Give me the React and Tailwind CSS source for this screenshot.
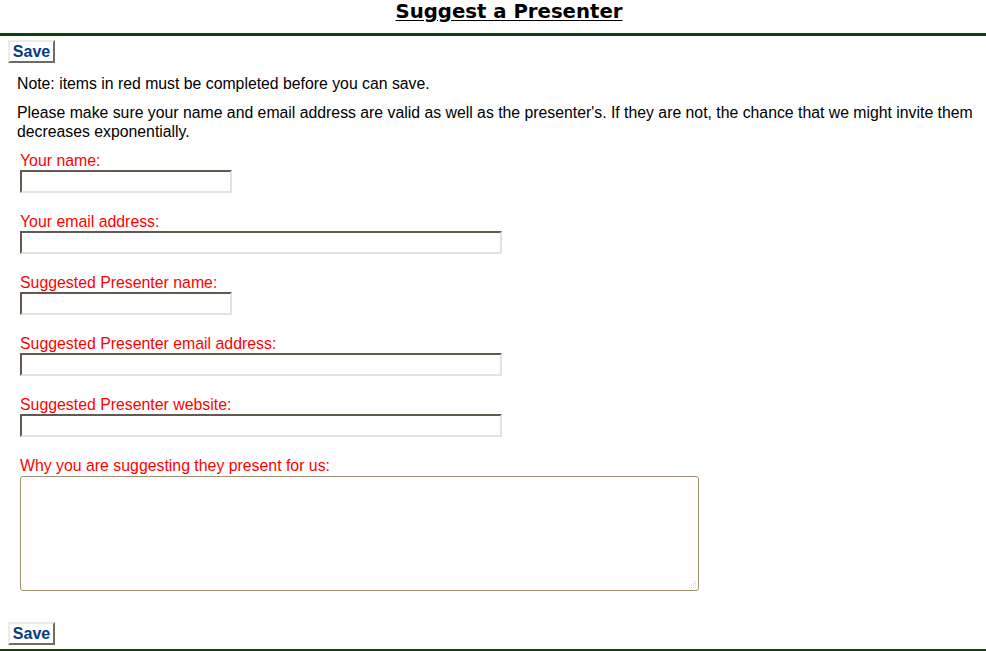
import { useState } from 'react';

const fields = [
  { key: 'name', label: 'Your name:', width: 'w-[212px]' },
  { key: 'email', label: 'Your email address:', width: 'w-[482px]' },
  { key: 'presenterName', label: 'Suggested Presenter name:', width: 'w-[212px]' },
  { key: 'presenterEmail', label: 'Suggested Presenter email address:', width: 'w-[482px]' },
  { key: 'presenterSite', label: 'Suggested Presenter website:', width: 'w-[482px]' },
];

const SaveButton = () => (
  <button
    type="button"
    className="h-[23px] w-[47px] border-2 border-t-[#ecebe6] border-l-[#ecebe6] border-b-[#6e6c68] border-r-[#6e6c68] bg-white text-[16px] leading-[19px] font-bold text-[#073b7c]"
  >
    Save
  </button>
);

const App = () => {
  const [values, setValues] = useState({});

  const update = (key) => (e) => setValues(prev => ({ ...prev, [key]: e.target.value }));

  return (
    <div className="w-[986px] min-h-[651px] bg-white text-black font-['Liberation_Sans',Arial,sans-serif]">
      {/* Title */}
      <div className="h-[33px] pl-[32px] text-center">
        <h1 className="inline-block font-['DejaVu_Sans',Verdana,sans-serif] text-[19.7px] leading-[24px] font-bold underline underline-offset-[2px]">
          Suggest a Presenter
        </h1>
      </div>
      <div className="h-[3px] bg-[#0b440b]" />

      <div className="pl-[8px] pt-[4px]">
        <SaveButton />
      </div>

      <div className="pl-[17px] pr-[6px] text-[15.8px] leading-[19px]">
        <p className="mt-[10px]">Note: items in red must be completed before you can save.</p>
        <p className="mt-[10px]">
          Please make sure your name and email address are valid as well as the presenter's. If they are not, the chance that we might invite them decreases exponentially.
        </p>
      </div>

      {/* Form fields */}
      <div className="pl-[20px] pt-[10px] text-[15.85px] leading-[19px] text-[#ff0000]">
        {fields.map(field => (
          <div key={field.key} className="mb-[19px]">
            <label className="block h-[19px]">{field.label}</label>
            <input
              type="text"
              value={values[field.key] || ''}
              onChange={update(field.key)}
              className={`block h-[23px] ${field.width} border-2 border-t-[#625a4f] border-l-[#625a4f] border-b-[#e6e2db] border-r-[#e6e2db] bg-white outline-none text-black`}
            />
          </div>
        ))}
        <label className="block h-[20px]">Why you are suggesting they present for us:</label>
        <div className="relative w-[679px]">
          <textarea
            value={values.reason || ''}
            onChange={update('reason')}
            className="block h-[115px] w-[679px] resize-none rounded-[3px] border border-[#9d9374] bg-white outline-none text-black"
          />
          {/* dotted resize grip */}
          <svg className="absolute right-[2px] bottom-[2px]" width="9" height="9" viewBox="0 0 9 9">
            <g fill="#d6d2c8">
              <rect x="7" y="1" width="1" height="1" />
              <rect x="5" y="3" width="1" height="1" />
              <rect x="7" y="3" width="1" height="1" />
              <rect x="3" y="5" width="1" height="1" />
              <rect x="5" y="5" width="1" height="1" />
              <rect x="7" y="5" width="1" height="1" />
              <rect x="1" y="7" width="1" height="1" />
              <rect x="3" y="7" width="1" height="1" />
              <rect x="5" y="7" width="1" height="1" />
              <rect x="7" y="7" width="1" height="1" />
            </g>
          </svg>
        </div>
      </div>

      <div className="pl-[8px] pt-[31px] pb-[3px]">
        <SaveButton />
      </div>
      <div className="h-[3px] bg-[#0b440b]" />
    </div>
  );
};

export default App;
